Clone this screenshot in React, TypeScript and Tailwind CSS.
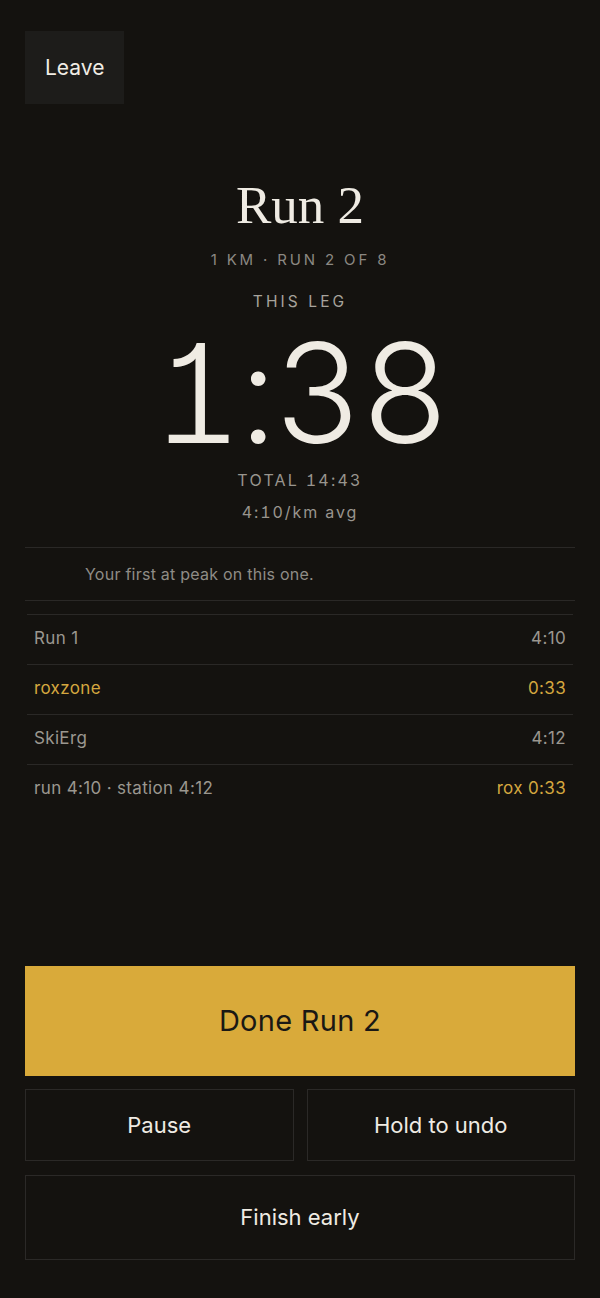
import React from 'react';

interface Split {
  label: string;
  value: string;
  accent?: boolean;
}

const splits: Split[] = [
  { label: 'Run 1', value: '4:10' },
  { label: 'roxzone', value: '0:33', accent: true },
  { label: 'SkiErg', value: '4:12' },
];

const sans = "font-['Inter','Liberation_Sans',sans-serif]";

export default function App() {
  return (
    <div className={`min-h-screen bg-[#14120f] text-[#efebe3] flex flex-col px-[25px] pt-[31px] pb-[38px] ${sans}`}>
      {/* Top bar */}
      <div>
        <button className="h-[73px] px-[20px] bg-[#1d1c1a] text-[21px] text-[#f0ece4]">
          Leave
        </button>
      </div>

      {/* Current leg */}
      <div className="flex flex-col items-center">
        <h1 className="mt-[75px] text-[53px] leading-none font-['Liberation_Serif','DejaVu_Serif',serif] text-[#efebe3]">
          Run 2
        </h1>
        <p className="mt-[20px] text-[15px] leading-none tracking-[0.19em] text-[#8b8882]">
          1 KM · RUN 2 OF 8
        </p>
        <p className="mt-[27px] text-[15.5px] leading-none tracking-[0.2em] text-[#a7a39c]">
          THIS LEG
        </p>
        <div className="mt-[14px] text-[138px] leading-none font-light tracking-[-0.02em] [font-feature-settings:'cv01','tnum'] text-[#efebe3]">
          1:38
        </div>
        <p className="mt-[10px] text-[16px] leading-none tracking-[0.14em] text-[#99958e] [font-feature-settings:'cv01','tnum']">
          TOTAL 14:43
        </p>
        <p className="mt-[16px] text-[16px] leading-none tracking-[0.12em] text-[#99958e] [font-feature-settings:'cv01','tnum']">
          4:10/km avg
        </p>
      </div>

      {/* Note */}
      <div className="mt-[27px] h-[54px] border-y border-[#2a2826] flex items-center pl-[60px]">
        <p className="text-[16px] text-[#8f8c86] tracking-[0.015em]">Your first at peak on this one.</p>
      </div>

      {/* Splits */}
      <div className="mt-[13px] mx-[2px]">
        {splits.map((s, i) => (
          <div
            key={i}
            className={`h-[50px] border-t border-[#2a2826] flex items-center justify-between px-[7px] text-[17px] tracking-[0.02em] ${s.accent ? 'text-[#d4a73f]' : 'text-[#9b978f]'}`}
          >
            <span>{s.label}</span>
            <span>{s.value}</span>
          </div>
        ))}
        <div className="h-[50px] border-t border-[#2a2826] flex items-center justify-between px-[7px] text-[17px] tracking-[0.02em] text-[#9b978f]">
          <span>run 4:10 · station 4:12</span>
          <span className="text-[#d4a73f]">rox 0:33</span>
        </div>
      </div>

      {/* Actions */}
      <div className="mt-auto flex flex-col">
        <button className="h-[110px] bg-[#d9aa3a] text-[#1a1814] text-[29px] tracking-[0.01em]">
          Done Run 2
        </button>
        <div className="mt-[13px] grid grid-cols-2 gap-[13px]">
          <button className="h-[72px] border border-[#2b2927] text-[22px] text-[#efebe3]">
            Pause
          </button>
          <button className="h-[72px] border border-[#2b2927] text-[22px] text-[#efebe3]">
            Hold to undo
          </button>
        </div>
        <button className="mt-[14px] h-[85px] border border-[#2b2927] text-[22px] text-[#efebe3]">
          Finish early
        </button>
      </div>
    </div>
  );
}
